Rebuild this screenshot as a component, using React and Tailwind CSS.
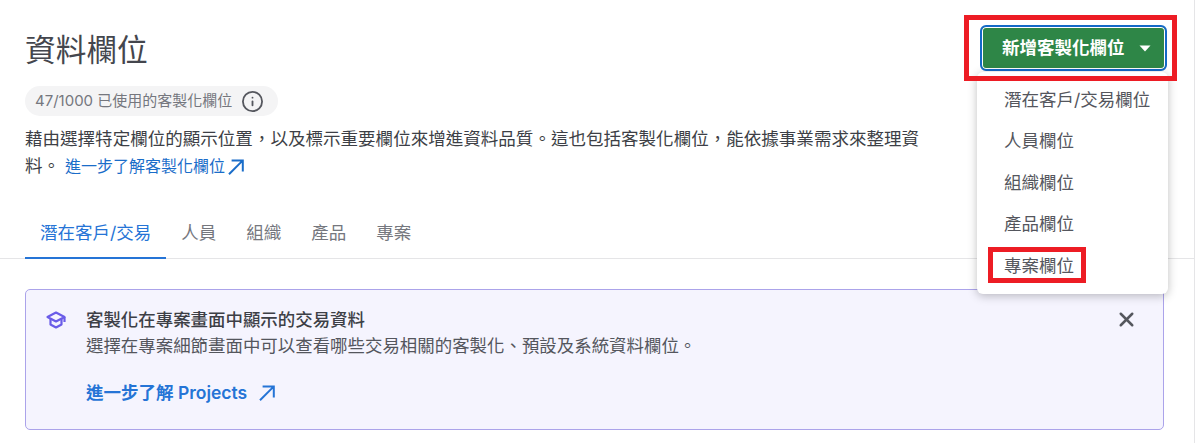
import React from "react";
import { X, Info } from "lucide-react";

const font = "font-['Inter','Noto_Sans_CJK_TC',sans-serif]";

const menuItems = ["潛在客戶/交易欄位", "人員欄位", "組織欄位", "產品欄位", "專案欄位"];
const tabs = ["人員", "組織", "產品", "專案"];
const intro = "藉由選擇特定欄位的顯示位置\uFF0C以及標示重要欄位來增進資料品質。這也包括客製化欄位\uFF0C能依據事業需求來整理資料。";

// long thin arrow, the lucide one is too small inside its box
const Arrow = ({ size = 16 }) => (
  <svg width={size} height={size} viewBox="0 0 16 16" fill="none" stroke="currentColor" strokeWidth="2">
    <path d="M1 15.2 14.6 1.6M3.6 1.4h11.2v11.2" />
  </svg>
);

const Cap = () => (
  <svg width="20" height="18" viewBox="0 0 20 18" fill="none" stroke="currentColor" strokeWidth="2.2" strokeLinejoin="round" className="mt-[4px] text-[#6a5ce8]">
    <path d="M10 1.5 18.5 6 10 10.5 1.5 6z" />
    <path d="M4.5 8v5.5L10 16.5l5.5-3V8" />
    <path d="M18.5 6v5" />
  </svg>
);

const App = () => {
  return (
    <div className={`relative h-[443px] w-[1195px] overflow-hidden border-r border-[#e5e5e7] bg-white ${font}`}>
      {/* Header */}
      <div className="flex items-start justify-between pl-[25px] pr-[27px] pt-[25px]">
        <div className="w-[900px]">
          <h1 className="text-[30.7px] leading-[50px] text-[#44464d]">資料欄位</h1>
          <div className="mt-[11px] inline-flex h-[30px] items-center gap-[9px] rounded-full bg-[#f4f4f5] pl-[10px] pr-[14px]">
            <span className="text-[15px] text-[#75777e]">47/1000 已使用的客製化欄位</span>
            <Info size={23} strokeWidth={1.9} className="text-[#55575e]" />
          </div>
          <p className="mt-[9px] w-[900px] text-[17.55px] leading-[27px] text-[#3d3f46]">
            {intro}
            <a className="ml-[5px] inline-flex items-center gap-[3px] text-[16px] text-[#1a6dc9]">
              進一步了解客製化欄位
              <Arrow />
            </a>
          </p>
        </div>
        <button className="flex h-[46px] w-[187px] items-center gap-[14px] rounded-[6px] border-2 border-[#1469c7] bg-[#2e8647] pl-[20px] text-[17.5px] font-bold text-white shadow-[inset_0_0_0_1px_white]">
          新增客製化欄位
          <svg width="12" height="7" viewBox="0 0 12 7"><path d="M0.5 0.5h11L6 6.5z" fill="white" /></svg>
        </button>
      </div>

      {/* Tabs */}
      <div className="mt-[31px] flex h-[48px] gap-[15px] border-b border-[#e5e5e7] pl-[25px] text-[17.5px]">
        <div className="-mb-px border-b-2 border-[#2574d6] px-[15px] pt-[9px] text-[#2574d6]">潛在客戶/交易</div>
        <div className="flex gap-[30px] pt-[9px] text-[#75777e]">
          {tabs.map((t) => (
            <span key={t}>{t}</span>
          ))}
        </div>
      </div>

      {/* Info banner */}
      <div className="mx-[25px] mt-[30px] flex h-[141px] w-[1139px] items-start rounded-[5px] border border-[#aba3ea] bg-[#f5f4fe] pl-[20px] pr-[25px] pt-[17px]">
        <Cap />
        <div className="ml-[20px] flex-1">
          <div className="text-[17.45px] font-medium leading-[25px] text-[#3d3f46]">客製化在專案畫面中顯示的交易資料</div>
          <div className="text-[17.45px] leading-[27px] text-[#54565d]">選擇在專案細節畫面中可以查看哪些交易相關的客製化、預設及系統資料欄位。</div>
          <a className="mt-[21px] flex items-center gap-[12px] text-[17.5px] font-semibold text-[#2574d6]">
            進一步了解 Projects
            <Arrow />
          </a>
        </div>
        <X size={23} strokeWidth={2.6} className="mt-[1px] ml-[1px] text-[#55575e]" />
      </div>

      {/* Dropdown menu */}
      <div className="absolute left-[977px] top-[72px] w-[191px] rounded-[6px] bg-white py-[7px] shadow-[0_2px_10px_rgba(0,0,0,0.25)]">
        {menuItems.map((item) => (
          <div key={item} className="flex h-[41.5px] items-center pl-[27px] text-[17.5px] text-[#54565d]">
            {item}
          </div>
        ))}
      </div>

      {/* Red annotation boxes */}
      <div className="absolute left-[964px] top-[15px] h-[66px] w-[213px] border-[5px] border-[#ed1c24]" />
      <div className="absolute left-[988px] top-[247px] h-[36px] w-[98px] border-[5px] border-[#ed1c24]" />
    </div>
  );
};

export default App;
